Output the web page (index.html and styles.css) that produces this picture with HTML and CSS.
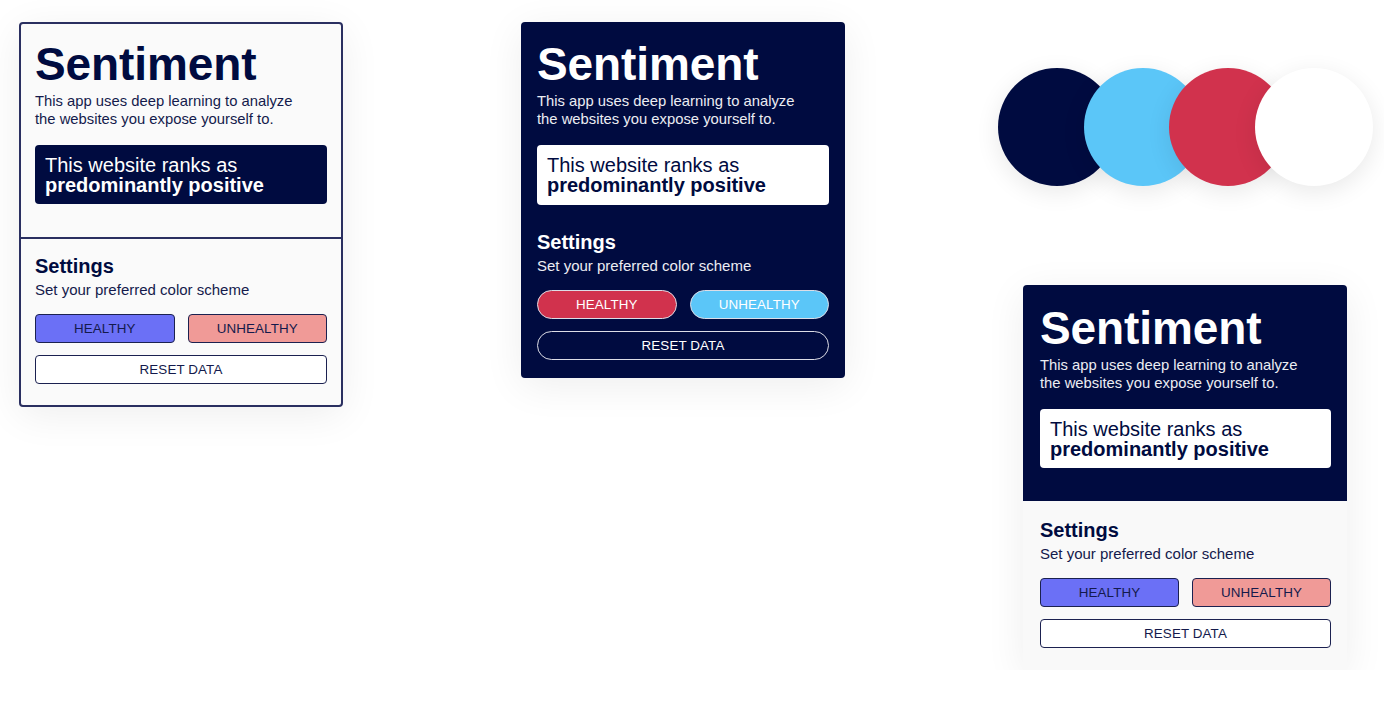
FILE: index.html
```html
<!DOCTYPE html>
<html lang="en">
<head>
<meta charset="utf-8">
<title>Sentiment</title>
<link rel="stylesheet" href="styles.css">
</head>
<body>
<main class="canvas">
  <section class="card card-light">
    <div class="card-top">
      <h1 class="title">Sentiment</h1>
      <p class="desc">This app uses deep learning to analyze<br>the websites you expose yourself to.</p>
      <div class="rank">This website ranks as<br><strong>predominantly positive</strong></div>
    </div>
    <div class="card-bottom">
      <h2 class="settings">Settings</h2>
      <p class="sub">Set your preferred color scheme</p>
      <div class="btn-row">
        <button class="btn btn-healthy">HEALTHY</button>
        <button class="btn btn-unhealthy">UNHEALTHY</button>
      </div>
      <button class="btn btn-reset">RESET DATA</button>
    </div>
  </section>

  <section class="card card-dark">
    <div class="card-top">
      <h1 class="title">Sentiment</h1>
      <p class="desc">This app uses deep learning to analyze<br>the websites you expose yourself to.</p>
      <div class="rank">This website ranks as<br><strong>predominantly positive</strong></div>
    </div>
    <div class="card-bottom">
      <h2 class="settings">Settings</h2>
      <p class="sub">Set your preferred color scheme</p>
      <div class="btn-row">
        <button class="btn btn-healthy">HEALTHY</button>
        <button class="btn btn-unhealthy">UNHEALTHY</button>
      </div>
      <button class="btn btn-reset">RESET DATA</button>
    </div>
  </section>

  <div class="col-right">
    <div class="palette">
      <span class="swatch sw-navy"></span>
      <span class="swatch sw-blue"></span>
      <span class="swatch sw-red"></span>
      <span class="swatch sw-white"></span>
    </div>
    <section class="card card-split">
      <div class="card-top">
        <h1 class="title">Sentiment</h1>
        <p class="desc">This app uses deep learning to analyze<br>the websites you expose yourself to.</p>
        <div class="rank">This website ranks as<br><strong>predominantly positive</strong></div>
      </div>
      <div class="card-bottom">
        <h2 class="settings">Settings</h2>
        <p class="sub">Set your preferred color scheme</p>
        <div class="btn-row">
          <button class="btn btn-healthy">HEALTHY</button>
          <button class="btn btn-unhealthy">UNHEALTHY</button>
        </div>
        <button class="btn btn-reset">RESET DATA</button>
      </div>
    </section>
  </div>
</main>
</body>
</html>
```

FILE: styles.css
```css
* { box-sizing: border-box; }

html, body {
  margin: 0;
  background: #ffffff;
  font-family: "Liberation Sans", Arial, sans-serif;
  color: #000b40;
}

.canvas {
  display: flex;
  align-items: flex-start;
  padding: 22px 0 0 19px;
}

/* ---------- card ---------- */
.card {
  width: 324px;
  border-radius: 4px;
  box-shadow: 0 8px 40px rgba(0, 0, 0, 0.07);
  overflow: hidden;
}

.card-top {
  padding: 19px 16px 33px;
}

.card-bottom {
  padding: 17px 16px 20px;
}

.title {
  margin: 0;
  font-size: 46px;
  line-height: 46px;
  font-weight: 700;
  letter-spacing: -0.1px;
}

.desc {
  margin: 5px 0 0;
  font-size: 14.8px;
  line-height: 18px;
}

.rank {
  margin-top: 17px;
  padding: 10px 10px 9px;
  border-radius: 4px;
  font-size: 20px;
  line-height: 20px;
}

.rank strong { font-weight: 700; }

.settings {
  margin: 0;
  font-size: 20px;
  line-height: 24px;
  font-weight: 700;
}

.sub {
  margin: 3px 0 0;
  font-size: 15px;
  line-height: 18px;
}

.btn-row {
  display: grid;
  grid-template-columns: 1fr 1fr;
  gap: 13px;
  margin-top: 15px;
}

.btn {
  display: flex;
  align-items: center;
  justify-content: center;
  width: 100%;
  height: 29px;
  padding: 0;
  font-family: "Liberation Sans", Arial, sans-serif;
  font-size: 13.4px;
  line-height: 1;
  letter-spacing: 0.1px;
  border-radius: 4px;
  cursor: pointer;
}

.btn-reset { margin-top: 12px; }

/* ---------- light card ---------- */
.card-light {
  background: #fafafa;
  border: 2px solid #2a2f60;
}

.card-light .card-top { padding: 17px 14px 33px; }
.card-light .card-bottom {
  border-top: 2px solid #2a2f60;
  padding: 15px 14px 21px;
}

.card-light .rank,
.card-split .rank {
  background: #000b40;
  color: #ffffff;
}

.card-light .desc,
.card-light .sub,
.card-split .sub { color: #141a4c; }

.card-light .btn,
.card-split .btn {
  color: #141a4c;
  border: 1.5px solid #1b2150;
}

.card-light .btn-healthy,
.card-split .btn-healthy { background: #6b70f6; }

.card-light .btn-unhealthy,
.card-split .btn-unhealthy { background: #f09a97; }

.card-light .btn-reset,
.card-split .btn-reset { background: #ffffff; }

/* ---------- dark card ---------- */
.card-dark {
  margin-left: 178px;
  background: #000b40;
  color: #ffffff;
}

.card-dark .card-top { padding: 19px 16px 25px; }
.card-dark .card-bottom { padding: 0 16px 18px; }

.card-dark .desc,
.card-dark .sub { color: #ecedf3; }

.card-dark .rank {
  background: #ffffff;
  color: #000b40;
  padding: 10px 10px 10px;
}

.card-dark .btn {
  color: #ffffff;
  border: 1.5px solid #dcdde6;
  border-radius: 15px;
}

.card-dark .btn-healthy { background: #d1324d; }
.card-dark .btn-unhealthy { background: #5bc6f8; }
.card-dark .btn-reset { background: transparent; }

/* ---------- split card ---------- */
.col-right {
  display: flex;
  flex-direction: column;
  align-items: flex-start;
  margin-left: 153px;
}

.palette {
  display: flex;
  margin-top: 46px;
}

.swatch {
  display: block;
  width: 118px;
  height: 118px;
  border-radius: 50%;
  box-shadow: 0 6px 24px rgba(0, 0, 0, 0.09);
}

.swatch + .swatch { margin-left: -32.5px; }

.sw-navy { background: #000b40; }
.sw-blue { background: #5bc6f8; }
.sw-red { background: #d1324d; }
.sw-white { background: #ffffff; }

.card-split {
  margin-top: 99px;
  margin-left: 25px;
  background: #f9f9f9;
}

.card-split .card-top {
  background: #000b40;
  color: #ffffff;
  padding: 20px 16px 33px 17px;
}

.card-split .desc { color: #ecedf3; }

.card-split .rank {
  background: #ffffff;
  color: #000b40;
}

.card-split .card-bottom { padding: 17px 16px 22px 17px; }
```
